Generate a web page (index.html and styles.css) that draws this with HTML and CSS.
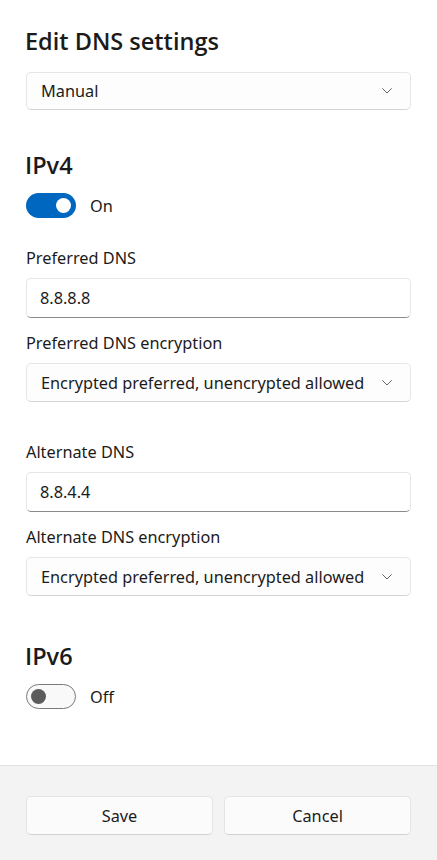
FILE: index.html
```html
<!DOCTYPE html>
<html lang="en">
<head>
<meta charset="utf-8">
<title>Edit DNS settings</title>
<link rel="stylesheet" href="styles.css">
</head>
<body>
<div class="dialog">
  <main class="content">
    <h1 class="title">Edit DNS settings</h1>
    <div class="select select-mode">
      <span>Manual</span>
      <svg class="chev" viewBox="0 0 10 6" width="10" height="6"><path d="M0.6 0.6 L5 5 L9.4 0.6" fill="none" stroke="#666666" stroke-width="1" stroke-linecap="round" stroke-linejoin="round"/></svg>
    </div>

    <h2 class="section section-v4">IPv4</h2>
    <div class="toggle-row">
      <span class="toggle on"><span class="knob"></span></span>
      <span class="toggle-label">On</span>
    </div>

    <label class="field-label first">Preferred DNS</label>
    <div class="input">8.8.8.8</div>
    <label class="field-label">Preferred DNS encryption</label>
    <div class="select">
      <span>Encrypted preferred, unencrypted allowed</span>
      <svg class="chev" viewBox="0 0 10 6" width="10" height="6"><path d="M0.6 0.6 L5 5 L9.4 0.6" fill="none" stroke="#666666" stroke-width="1" stroke-linecap="round" stroke-linejoin="round"/></svg>
    </div>

    <label class="field-label group">Alternate DNS</label>
    <div class="input">8.8.4.4</div>
    <label class="field-label">Alternate DNS encryption</label>
    <div class="select">
      <span>Encrypted preferred, unencrypted allowed</span>
      <svg class="chev" viewBox="0 0 10 6" width="10" height="6"><path d="M0.6 0.6 L5 5 L9.4 0.6" fill="none" stroke="#666666" stroke-width="1" stroke-linecap="round" stroke-linejoin="round"/></svg>
    </div>

    <h2 class="section section-v6">IPv6</h2>
    <div class="toggle-row">
      <span class="toggle off"><span class="knob"></span></span>
      <span class="toggle-label">Off</span>
    </div>
  </main>
  <footer class="footer">
    <button class="btn">Save</button>
    <button class="btn">Cancel</button>
  </footer>
</div>
</body>
</html>
```

FILE: styles.css
```css
* { box-sizing: border-box; }
html, body { margin: 0; padding: 0; }
body {
  font-family: "Noto Sans", "Open Sans", sans-serif;
  color: #1b1b1b;
  background: #ffffff;
  font-size: 16.3px;
}
.dialog {
  height: 860px;
  display: flex;
  flex-direction: column;
}
.content {
  flex: 1;
  padding: 25px 26px 0 26px;
  display: flex;
  flex-direction: column;
}
.title, .section {
  margin: 0;
  font-family: "Open Sans", "Noto Sans", sans-serif;
  font-size: 23.5px;
  font-weight: 600;
  line-height: 32px;
  height: 32px;
  margin-left: -1px;
}
.select {
  height: 39px;
  border: 1px solid #e6e6e6;
  border-bottom-color: #d4d4d4;
  border-radius: 5px;
  background: #fdfdfd;
  display: flex;
  align-items: center;
  justify-content: space-between;
  padding: 0 18px 0 14px;
}
.select-mode { margin-top: 15px; height: 38px; }
.chev { display: block; }
.section-v4 { margin-top: 39px; }
.section-v6 { margin-top: 44px; }
.toggle-row {
  margin-top: 12px;
  display: flex;
  align-items: center;
  gap: 14px;
  height: 25px;
}
.toggle {
  width: 50px;
  height: 25px;
  border-radius: 13px;
  display: flex;
  align-items: center;
  padding: 0 5px;
}
.toggle .knob {
  width: 15px;
  height: 15px;
  border-radius: 50%;
  display: block;
}
.toggle.on { background: #0067c0; justify-content: flex-end; }
.toggle.on .knob { background: #ffffff; }
.toggle.off { background: #f9f9f9; border: 1px solid #7a7a7a; padding: 0 4px; }
.toggle.off .knob { background: #5c5c5c; }
.field-label {
  display: block;
  line-height: 24px;
  height: 24px;
  margin-top: 13px;
}
.field-label.first { margin-top: 28px; }
.field-label.group { margin-top: 38px; }
.input {
  margin-top: 8px;
  height: 40px;
  border: 1px solid #e6e6e6;
  border-bottom: 1px solid #8a8a8a;
  border-radius: 5px;
  background: #ffffff;
  display: flex;
  align-items: center;
  padding: 0 13px;
}
.field-label + .select { margin-top: 8px; }
.footer {
  height: 95px;
  background: #f3f3f3;
  border-top: 1px solid #e2e2e2;
  display: flex;
  gap: 11px;
  padding: 30px 26px 0 26px;
  align-items: flex-start;
}
.btn {
  flex: 1;
  height: 39px;
  border: 1px solid #e4e4e4;
  border-bottom-color: #d0d0d0;
  border-radius: 5px;
  background: #fbfbfb;
  font-family: inherit;
  font-size: 16.3px;
  color: #1b1b1b;
  padding: 0;
}
```
